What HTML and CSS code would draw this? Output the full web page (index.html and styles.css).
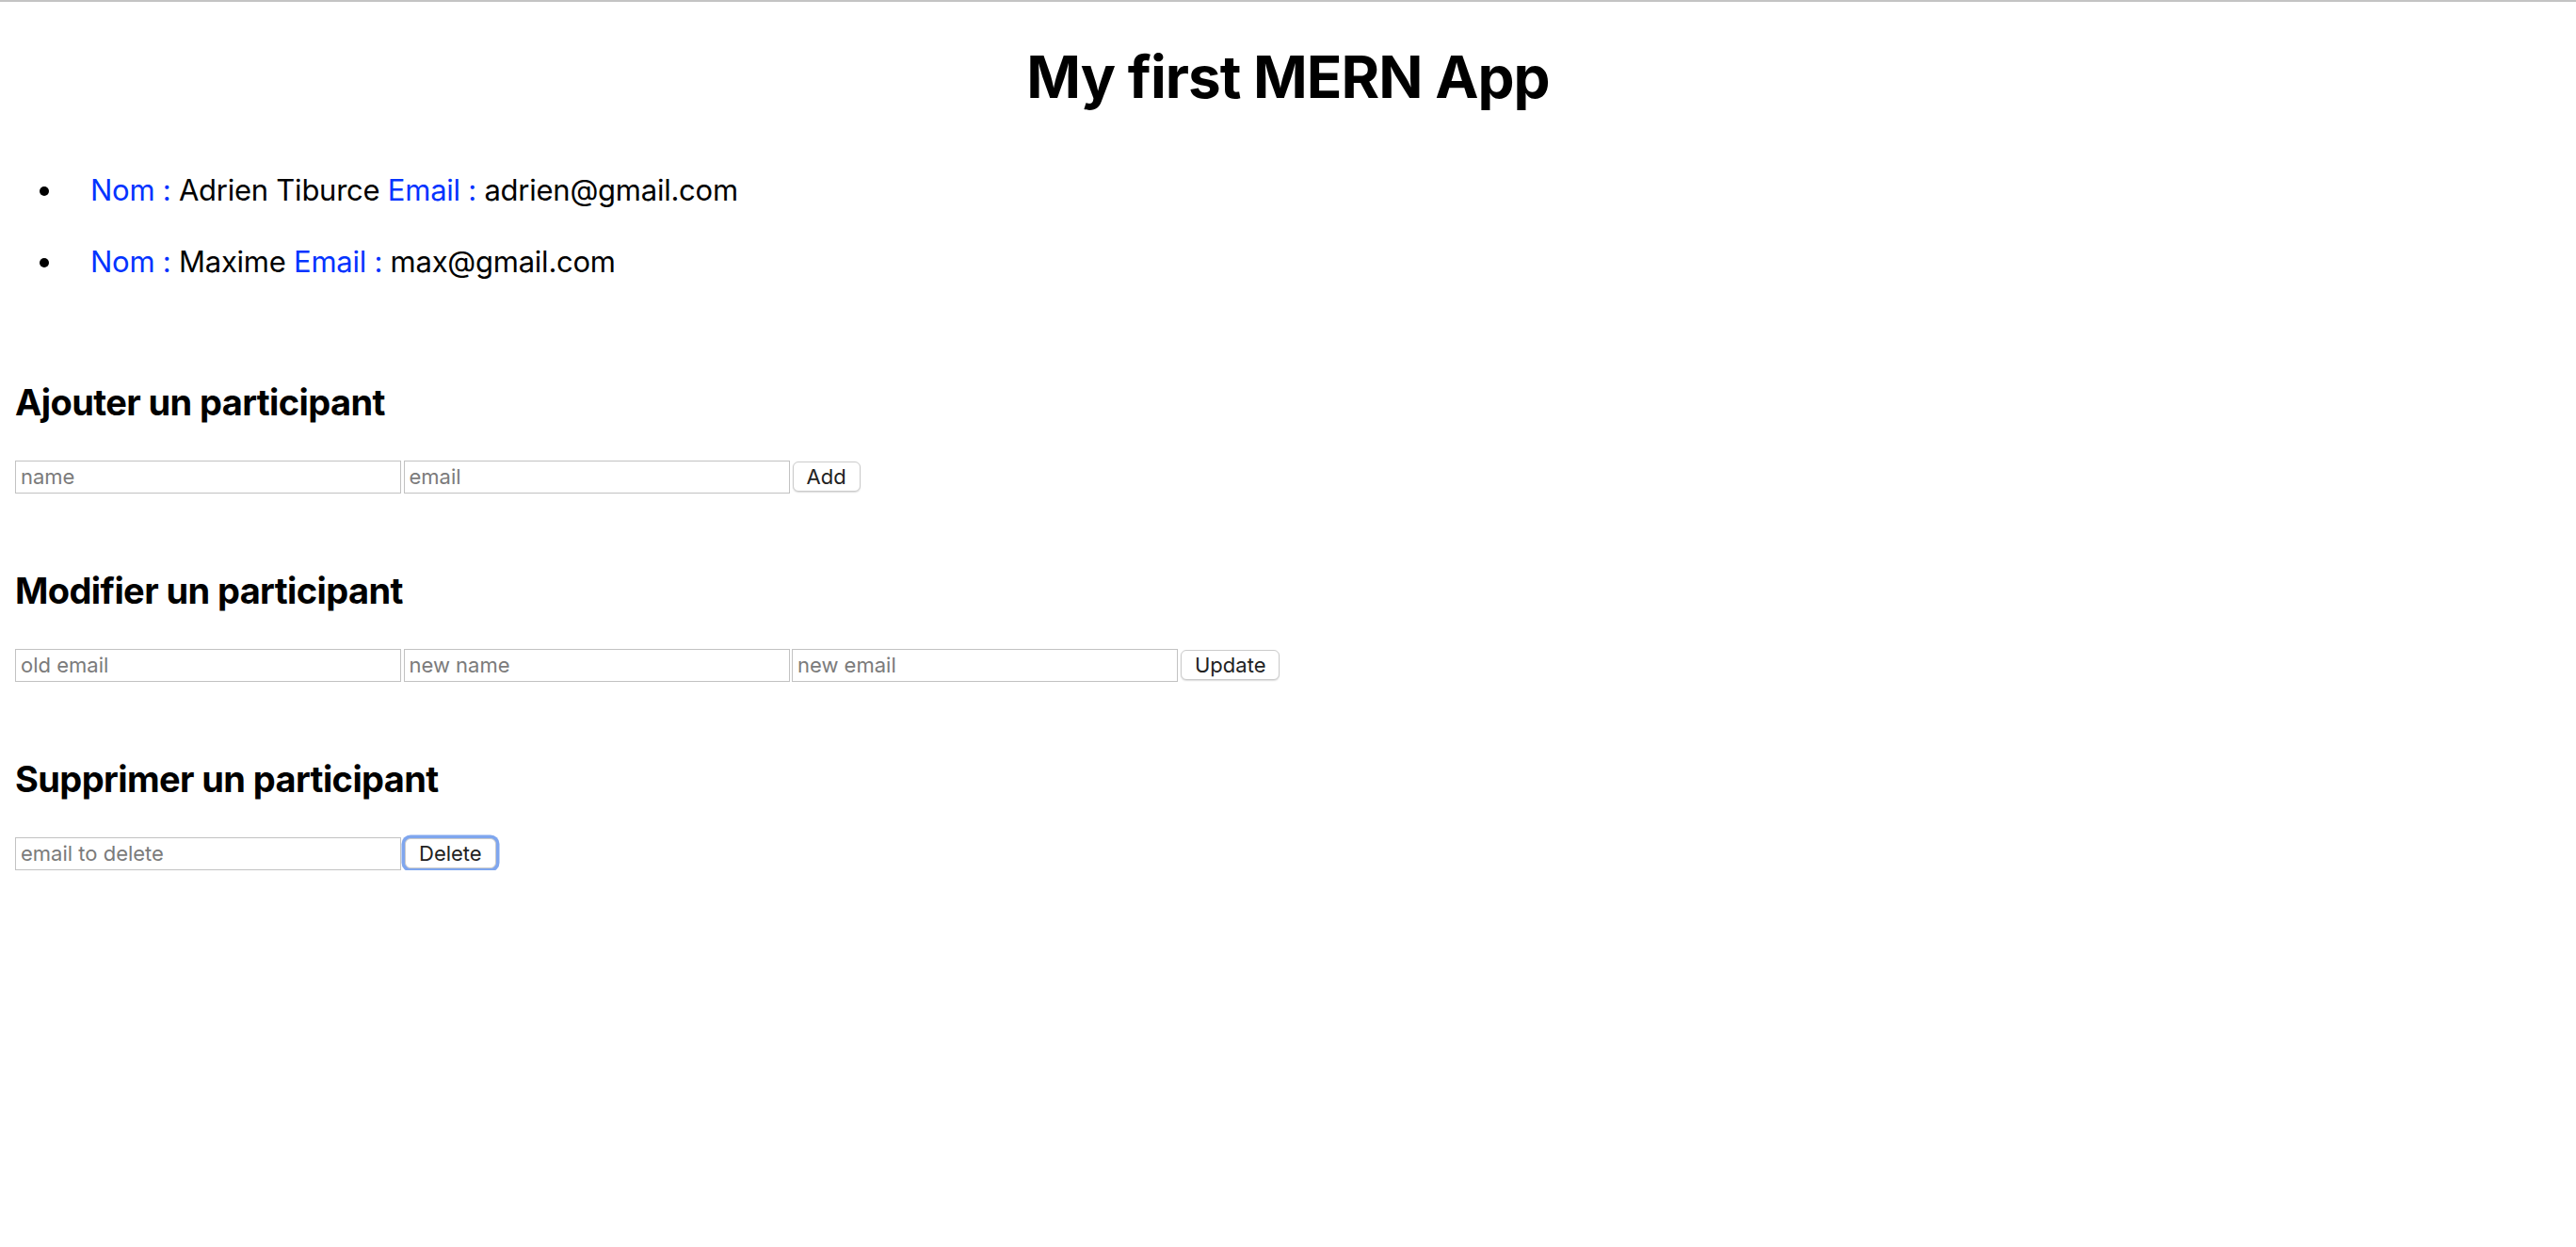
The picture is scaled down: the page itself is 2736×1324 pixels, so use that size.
FILE: index.html
```html
<!DOCTYPE html>
<html lang="fr">
<head>
<meta charset="utf-8">
<title>My first MERN App</title>
<link rel="stylesheet" href="styles.css">
</head>
<body>
<div class="page">
  <h1 class="title">My first MERN App</h1>
  <ul class="people">
    <li class="person"><span class="label">Nom : </span>Adrien Tiburce <span class="label">Email : </span>adrien@gmail.com</li>
    <li class="person"><span class="label">Nom : </span>Maxime <span class="label">Email : </span>max@gmail.com</li>
  </ul>

  <section class="block block-first">
    <h2 class="block-title">Ajouter un participant</h2>
    <form class="row"><input class="field" type="text" placeholder="name"><input class="field" type="text" placeholder="email"><button class="btn" type="button">Add</button></form>
  </section>

  <section class="block">
    <h2 class="block-title">Modifier un participant</h2>
    <form class="row"><input class="field" type="text" placeholder="old email"><input class="field" type="text" placeholder="new name"><input class="field" type="text" placeholder="new email"><button class="btn" type="button">Update</button></form>
  </section>

  <section class="block">
    <h2 class="block-title">Supprimer un participant</h2>
    <form class="row"><input class="field" type="text" placeholder="email to delete"><button class="btn btn-focus" type="button">Delete</button></form>
  </section>
</div>
</body>
</html>
```
FILE: styles.css
```css
html, body {
  margin: 0;
  padding: 0;
  background: #ffffff;
}

body {
  font-family: Inter, "Noto Sans", "Liberation Sans", sans-serif;
  color: #000000;
  border-top: 2px solid #c4c4c4;
}

.page {
  padding: 0 16px;
}

.title {
  margin: 42.3px 0 0;
  font-size: 62px;
  line-height: 76.8px;
  letter-spacing: -1px;
  font-weight: 700;
  text-align: center;
}

.people {
  list-style: none;
  margin: 61.5px 0 0;
  padding: 0 0 0 80px;
  font-size: 31px;
  line-height: 38.4px;
  letter-spacing: -0.25px;
}

.person {
  margin: 0 0 37.6px;
}

.person:last-child {
  margin-bottom: 0;
}

.person::before {
  content: "";
  display: inline-block;
  width: 10px;
  height: 10px;
  border-radius: 50%;
  background: #000000;
  margin-left: -54px;
  margin-right: 44px;
  vertical-align: 5px;
}

.label {
  color: #0433ff;
}

.block {
  margin-top: 79.4px;
}

.block-first {
  margin-top: 106.35px;
}

.block-title {
  margin: 0 0 37.6px;
  font-size: 38px;
  line-height: 48px;
  letter-spacing: -0.6px;
  font-weight: 700;
}

.row {
  display: flex;
  align-items: center;
  gap: 2.5px;
  margin: 0;
}

.field {
  box-sizing: border-box;
  width: 410px;
  height: 35px;
  margin: 0;
  padding: 0 5px;
  border: 1px solid #c2c2c2;
  border-radius: 0;
  background: #ffffff;
  font-family: Inter, "Noto Sans", sans-serif;
  font-size: 22px;
  color: #000000;
  outline: none;
}

.field::placeholder {
  color: #7b7b7b;
}

.btn {
  box-sizing: border-box;
  height: 32px;
  margin: 0 0 0 0.5px;
  padding: 0 14px;
  border: 1px solid #cbcbcb;
  border-radius: 6px;
  background: #ffffff;
  font-family: Inter, "Noto Sans", sans-serif;
  font-size: 22px;
  line-height: 30px;
  color: #222222;
  box-shadow: 0 1px 1.5px rgba(0, 0, 0, 0.14);
}

.btn-focus {
  margin-left: 1.5px;
  box-shadow: 0 0 0 3.5px #7fa6ee;
}
```
